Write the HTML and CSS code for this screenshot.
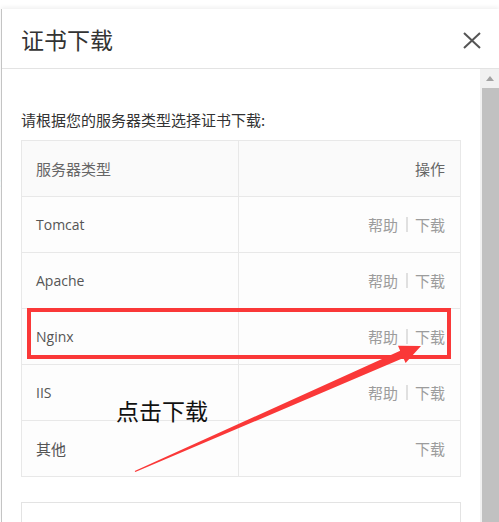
FILE: index.html
```html
<!DOCTYPE html>
<html lang="zh-CN">
<head>
<meta charset="utf-8">
<title>证书下载</title>
<link rel="stylesheet" href="styles.css">
</head>
<body>
<div class="page">
  <span class="bg-mark">:</span>
  <div class="modal">
    <div class="modal-header">
      <div class="modal-title">证书下载</div>
      <svg class="close" width="18" height="17" viewBox="0 0 18 17">
        <path d="M1 1 L17 16 M17 1 L1 16" stroke="#555" stroke-width="2" fill="none"/>
      </svg>
    </div>
    <div class="modal-body">
      <div class="content">
        <p class="intro">请根据您的服务器类型选择证书下载:</p>
        <div class="tbl">
          <div class="row head">
            <div class="cell name">服务器类型</div>
            <div class="cell ops">操作</div>
          </div>
          <div class="row">
            <div class="cell name"><span class="en">Tomcat</span></div>
            <div class="cell ops"><span>帮助</span><i class="sep"></i><span>下载</span></div>
          </div>
          <div class="row">
            <div class="cell name"><span class="en">Apache</span></div>
            <div class="cell ops"><span>帮助</span><i class="sep"></i><span>下载</span></div>
          </div>
          <div class="row">
            <div class="cell name"><span class="en">Nginx</span></div>
            <div class="cell ops"><span>帮助</span><i class="sep"></i><span>下载</span></div>
          </div>
          <div class="row">
            <div class="cell name"><span class="en">IIS</span></div>
            <div class="cell ops"><span>帮助</span><i class="sep"></i><span>下载</span></div>
          </div>
          <div class="row">
            <div class="cell name">其他</div>
            <div class="cell ops"><span>下载</span></div>
          </div>
        </div>
        <div class="next-box"></div>
      </div>
      <div class="scrollbar">
        <div class="scroll-up"><i class="tri"></i></div>
        <div class="thumb"></div>
      </div>
    </div>
  </div>

  <div class="highlight"></div>
  <div class="callout">点击下载</div>
  <svg class="arrow" width="499" height="522" viewBox="0 0 499 522">
    <polygon fill="#fa3838" points="134.7,470.9 400.2,350.8 398,345.7 421,346 405.6,363.1 403.4,358.1 135.3,472.1"/>
  </svg>
</div>
</body>
</html>
```
FILE: styles.css
```css
html, body {
  margin: 0;
  padding: 0;
  background: #fff;
}
body {
  font-family: "Noto Sans CJK SC", "Open Sans", sans-serif;
  color: #333;
}
.page {
  position: relative;
  width: 499px;
  height: 522px;
  overflow: hidden;
  background: #fff;
}
.bg-mark {
  position: absolute;
  left: -3px;
  top: 172px;
  font-size: 13px;
  color: #333;
}
.modal {
  margin-top: 9px;
  margin-left: 1px;
  border-left: 1px solid #c4c4c4;
  background: #fff;
  box-shadow: 0 -2px 4px rgba(0, 0, 0, 0.06);
  height: 513px;
  display: flex;
  flex-direction: column;
}
.modal-header {
  height: 59px;
  flex: none;
  border-bottom: 1px solid #e3e3e3;
  display: flex;
  align-items: center;
  justify-content: space-between;
  padding: 0 18px 0 19px;
}
.modal-title {
  font-size: 23px;
  line-height: 28px;
  color: #333;
}
.close {
  display: block;
  margin-top: 3px;
}
.modal-body {
  flex: 1;
  display: flex;
  min-height: 0;
}
.content {
  flex: 1;
  padding: 0 19px;
  overflow: hidden;
}
.intro {
  margin: 0;
  padding-top: 41px;
  font-size: 15px;
  line-height: 20px;
  color: #333;
}
.tbl {
  margin-top: 10px;
  border: 1px solid #e8e8e8;
  background: #fdfdfd;
}
.row {
  display: grid;
  grid-template-columns: 217px 1fr;
  height: 55px;
  border-bottom: 1px solid #e8e8e8;
}
.row:last-child {
  border-bottom: none;
}
.row.head {
  background: #fafafa;
}
.cell {
  display: flex;
  align-items: center;
  font-size: 15px;
  line-height: 20px;
}
.cell.name {
  padding-left: 14px;
  border-right: 1px solid #e8e8e8;
  color: #555;
}
.cell.ops {
  justify-content: flex-end;
  padding-right: 15px;
  color: #9c9c9c;
}
.row.head .cell {
  color: #666;
}
.en {
  font-family: "Open Sans", "Noto Sans CJK SC", sans-serif;
  font-size: 14px;
}
.sep {
  display: block;
  width: 2px;
  height: 15px;
  background: #e0e0e0;
  margin: 0 7px 0 8px;
}
.next-box {
  margin-top: 25px;
  height: 60px;
  border: 1px solid #e3e3e3;
}
.scrollbar {
  width: 19px;
  flex: none;
  background: #f1f1f1;
  display: flex;
  flex-direction: column;
}
.scroll-up {
  height: 19px;
  flex: none;
}
.tri {
  display: block;
  width: 0;
  height: 0;
  margin: 7px 0 0 6px;
  border-left: 4px solid transparent;
  border-right: 4px solid transparent;
  border-bottom: 5px solid #a3a3a3;
}
.thumb {
  flex: 1;
  margin-left: 2px;
  background: #c1c1c1;
}
.highlight {
  position: absolute;
  left: 27px;
  top: 308px;
  width: 424px;
  height: 51px;
  box-sizing: border-box;
  border: 4px solid #fa3838;
}
.callout {
  position: absolute;
  left: 116px;
  top: 396px;
  font-size: 23px;
  line-height: 28px;
  color: #111;
}
.arrow {
  position: absolute;
  left: 0;
  top: 0;
  pointer-events: none;
}
```
